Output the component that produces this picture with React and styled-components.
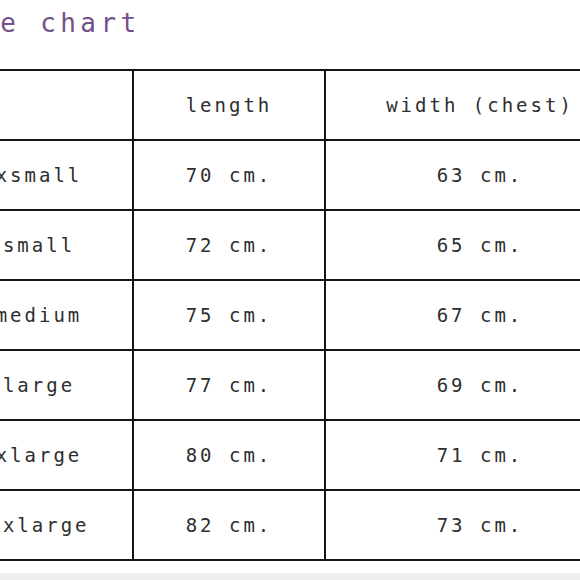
import React from 'react'
import styled, { createGlobalStyle } from 'styled-components'

const GlobalStyle = createGlobalStyle`
  html, body {
    margin: 0;
    padding: 0;
    background: #fff;
    overflow: hidden;
  }
  body {
    font-family: "DejaVu Sans Mono", "Liberation Mono", monospace;
  }
`

const sizes = [
  { name: 'xsmall', length: '70 cm.', width: '63 cm.' },
  { name: 'small', length: '72 cm.', width: '65 cm.' },
  { name: 'medium', length: '75 cm.', width: '67 cm.' },
  { name: 'large', length: '77 cm.', width: '69 cm.' },
  { name: 'xlarge', length: '80 cm.', width: '71 cm.' },
  { name: 'xxlarge', length: '82 cm.', width: '73 cm.' },
]

export default function App() {
  return (
    <Page>
      <GlobalStyle />
      <Sheet>
        <Title>Size chart</Title>
        <Chart>
          <colgroup>
            <col style={{ width: 188 }} />
            <col style={{ width: 192 }} />
            <col style={{ width: 310 }} />
          </colgroup>
          <thead>
            <tr>
              <Cell as="th"></Cell>
              <Cell as="th">length</Cell>
              <Cell as="th">width (chest)</Cell>
            </tr>
          </thead>
          <tbody>
            {sizes.map(s => (
              <tr key={s.name}>
                <Cell>{s.name}</Cell>
                <Cell>{s.length}</Cell>
                <Cell>{s.width}</Cell>
              </tr>
            ))}
          </tbody>
        </Chart>
      </Sheet>
      <Footer />
    </Page>
  )
}

const Page = styled.div`
  width: 580px;
  height: 580px;
  display: flex;
  flex-direction: column;
  overflow: hidden;
  background: #fff;
`

const Sheet = styled.div`
  flex: 1;
  margin-left: -56px;
  padding-top: 8px;
`

const Title = styled.h1`
  margin: 0 0 0 -4px;
  font-family: "DejaVu Sans Mono", "Liberation Mono", monospace;
  font-size: 26px;
  font-weight: normal;
  line-height: 30px;
  letter-spacing: 4.4px;
  color: #74508a;
  height: 61px;
`

const Chart = styled.table`
  border-collapse: collapse;
  table-layout: fixed;
  width: 690px;
`

const Cell = styled.td`
  height: 68px;
  padding: 0;
  border: 2px solid #151515;
  text-align: center;
  vertical-align: middle;
  font-family: "DejaVu Sans Mono", "Liberation Mono", monospace;
  font-size: 19px;
  font-weight: normal;
  letter-spacing: 3px;
  color: #2e2e2e;
  white-space: nowrap;
`

const Footer = styled.div`
  height: 7px;
  background: #efefef;
`
